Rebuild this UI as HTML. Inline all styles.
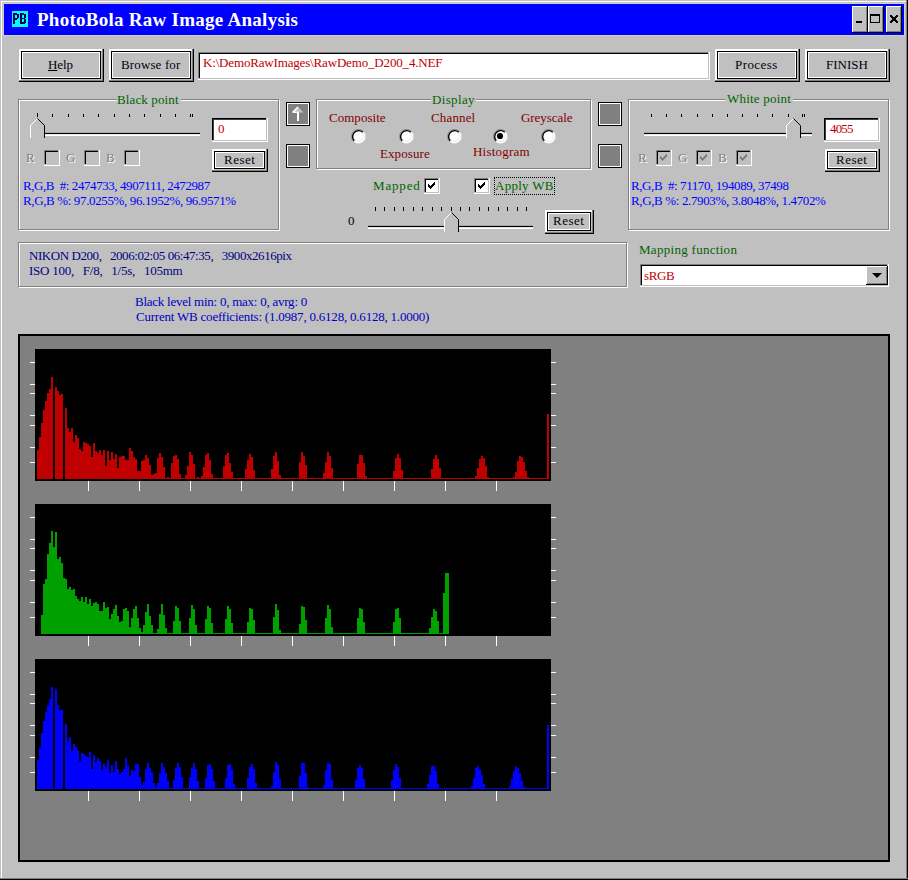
<!DOCTYPE html>
<html><head><meta charset="utf-8"><style>
html,body{margin:0;padding:0;width:908px;height:880px;overflow:hidden;background:#c0c0c0}
.a{position:absolute;box-sizing:border-box}
.t{position:absolute;font-family:"Liberation Serif",serif;white-space:pre;line-height:1;}
svg.a{overflow:visible}
</style></head><body>
<div class="a" style="left:0px;top:0px;width:908px;height:880px;background:#c0c0c0"></div>
<div class="a" style="left:1px;top:1px;width:906px;height:878px;border-left:1px solid #fff;border-top:1px solid #fff;box-sizing:border-box"></div>
<div class="a" style="left:906px;top:0px;width:1px;height:880px;background:#808080"></div>
<div class="a" style="left:907px;top:0px;width:1px;height:880px;background:#000"></div>
<div class="a" style="left:0px;top:878px;width:908px;height:1px;background:#808080"></div>
<div class="a" style="left:0px;top:879px;width:908px;height:1px;background:#000"></div>
<div class="a" style="left:3px;top:3px;width:902px;height:33px;background:#d4d0c8"></div>
<div class="a" style="left:4px;top:4px;width:900px;height:31px;background:#0000ff"></div>
<div class="a" style="left:12px;top:11px;width:16px;height:16px;background:#00ffff"></div>
<svg class="a" style="left:12px;top:11px" width="16" height="16" shape-rendering="crispEdges"><path fill="#000060" d="M1 2h4v1h-4zM8 2h4v1h-4zM1 3h6v1h-6zM8 3h6v1h-6zM1 4h2v1h-2zM5 4h2v1h-2zM8 4h2v1h-2zM12 4h2v1h-2zM1 5h2v1h-2zM5 5h2v1h-2zM8 5h2v1h-2zM12 5h2v1h-2zM1 6h2v1h-2zM5 6h2v1h-2zM8 6h2v1h-2zM12 6h2v1h-2zM1 7h5v1h-5zM8 7h5v1h-5zM1 8h4v1h-4zM8 8h2v1h-2zM12 8h2v1h-2zM1 9h2v1h-2zM8 9h2v1h-2zM12 9h2v1h-2zM1 10h2v1h-2zM8 10h2v1h-2zM12 10h2v1h-2zM1 11h2v1h-2zM8 11h6v1h-6zM1 12h2v1h-2zM8 12h5v1h-5z"/></svg>
<div class="t" style="left:37.00px;top:9.79px;color:#fff;font-size:19px;font-weight:bold;letter-spacing:0.263px;">PhotoBola Raw Image Analysis</div>
<div class="a" style="left:852px;top:6px;width:16px;height:27px;background:#c0c0c0;box-shadow:inset -1px -1px #000, inset 1px 1px #fff, inset -2px -2px #808080"></div>
<div class="a" style="left:868px;top:6px;width:16px;height:27px;background:#c0c0c0;box-shadow:inset -1px -1px #000, inset 1px 1px #fff, inset -2px -2px #808080"></div>
<div class="a" style="left:886px;top:6px;width:16px;height:27px;background:#c0c0c0;box-shadow:inset -1px -1px #000, inset 1px 1px #fff, inset -2px -2px #808080"></div>
<div class="a" style="left:856px;top:21px;width:6px;height:2px;background:#000"></div>
<div class="a" style="left:870px;top:14px;width:10px;height:9px;border:1px solid #000;border-top-width:2px;box-sizing:border-box"></div>
<svg class="a" style="left:890px;top:15px" width="8" height="8" shape-rendering="crispEdges"><path d="M0 0h2v1h-2zM6 0h2v1h-2zM0 1h3v1h-3zM5 1h3v1h-3zM1 2h6v1h-6zM2 3h4v1h-4zM2 4h4v1h-4zM1 5h6v1h-6zM0 6h3v1h-3zM5 6h3v1h-3zM0 7h2v1h-2zM6 7h2v1h-2z" fill="#000"/></svg>
<div class="a" style="left:19px;top:49px;width:85px;height:33px;background:#c0c0c0;box-shadow:inset -1px -1px #000, inset -2px -2px #808080, inset 2px 2px #fff"></div>
<div class="a" style="left:21px;top:51px;width:80px;height:28px;border:1px solid #000;box-sizing:border-box;box-shadow:inset 1px 1px #fff, inset -1px -1px #fff"></div>
<div class="t" style="left:48.00px;top:57.91px;color:#000010;font-size:13px;letter-spacing:-0.067px;"><u>H</u>elp</div>
<div class="a" style="left:109px;top:49px;width:85px;height:33px;background:#c0c0c0;box-shadow:inset -1px -1px #000, inset -2px -2px #808080, inset 2px 2px #fff"></div>
<div class="a" style="left:111px;top:51px;width:80px;height:28px;border:1px solid #000;box-sizing:border-box;box-shadow:inset 1px 1px #fff, inset -1px -1px #fff"></div>
<div class="t" style="left:121.00px;top:57.91px;color:#000010;font-size:13px;letter-spacing:0.133px;">Browse for</div>
<div class="a" style="left:715px;top:49px;width:85px;height:33px;background:#c0c0c0;box-shadow:inset -1px -1px #000, inset -2px -2px #808080, inset 2px 2px #fff"></div>
<div class="a" style="left:717px;top:51px;width:80px;height:28px;border:1px solid #000;box-sizing:border-box;box-shadow:inset 1px 1px #fff, inset -1px -1px #fff"></div>
<div class="t" style="left:735.00px;top:57.91px;color:#000010;font-size:13px;letter-spacing:0.417px;">Process</div>
<div class="a" style="left:805px;top:49px;width:85px;height:33px;background:#c0c0c0;box-shadow:inset -1px -1px #000, inset -2px -2px #808080, inset 2px 2px #fff"></div>
<div class="a" style="left:807px;top:51px;width:80px;height:28px;border:1px solid #000;box-sizing:border-box;box-shadow:inset 1px 1px #fff, inset -1px -1px #fff"></div>
<div class="t" style="left:826.00px;top:57.91px;color:#000010;font-size:13px;letter-spacing:-0.020px;">FINISH</div>
<div class="a" style="left:198px;top:52px;width:512px;height:28px;background:#fff;box-shadow:inset -1px -1px #fff, inset -2px -2px #c0c0c0, inset 1px 1px #808080, inset 2px 2px #000"></div>
<div class="t" style="left:203.00px;top:55.91px;color:#c00000;font-size:13px;letter-spacing:-0.165px;">K:\DemoRawImages\RawDemo_D200_4.NEF</div>
<div class="a" style="left:18px;top:99px;width:261px;height:131px;border:1px solid #808080;box-sizing:border-box;box-shadow:inset 1px 1px #fff, 1px 1px #fff"></div>
<div class="a" style="left:316px;top:99px;width:275px;height:70px;border:1px solid #808080;box-sizing:border-box;box-shadow:inset 1px 1px #fff, 1px 1px #fff"></div>
<div class="a" style="left:628px;top:99px;width:261px;height:131px;border:1px solid #808080;box-sizing:border-box;box-shadow:inset 1px 1px #fff, 1px 1px #fff"></div>
<div class="a" style="left:18px;top:242px;width:609px;height:45px;border:1px solid #808080;box-sizing:border-box;box-shadow:inset 1px 1px #fff, 1px 1px #fff"></div>
<div class="a" style="left:117px;top:96px;width:64px;height:8px;background:#c0c0c0"></div>
<div class="t" style="left:117.00px;top:92.81px;color:#006400;font-size:13px;letter-spacing:0.130px;">Black point</div>
<div class="a" style="left:431px;top:96px;width:45px;height:8px;background:#c0c0c0"></div>
<div class="t" style="left:432.00px;top:93.01px;color:#006400;font-size:13px;letter-spacing:0.350px;">Display</div>
<div class="a" style="left:725px;top:96px;width:68px;height:8px;background:#c0c0c0"></div>
<div class="t" style="left:727.00px;top:91.51px;color:#006400;font-size:13px;letter-spacing:0.220px;">White point</div>
<div class="a" style="left:30px;top:132px;width:170px;height:1px;background:#a8a8a8"></div>
<div class="a" style="left:30px;top:133px;width:170px;height:1px;background:#000"></div>
<div class="a" style="left:30px;top:134px;width:170px;height:1px;background:#e4e4e4"></div>
<div class="a" style="left:30px;top:135px;width:170px;height:1px;background:#fff"></div>
<div class="a" style="left:37px;top:114px;width:1px;height:3px;background:#000"></div>
<div class="a" style="left:52px;top:114px;width:1px;height:3px;background:#000"></div>
<div class="a" style="left:68px;top:114px;width:1px;height:3px;background:#000"></div>
<div class="a" style="left:83px;top:114px;width:1px;height:3px;background:#000"></div>
<div class="a" style="left:98px;top:114px;width:1px;height:3px;background:#000"></div>
<div class="a" style="left:114px;top:114px;width:1px;height:3px;background:#000"></div>
<div class="a" style="left:129px;top:114px;width:1px;height:3px;background:#000"></div>
<div class="a" style="left:144px;top:114px;width:1px;height:3px;background:#000"></div>
<div class="a" style="left:160px;top:114px;width:1px;height:3px;background:#000"></div>
<div class="a" style="left:175px;top:114px;width:1px;height:3px;background:#000"></div>
<div class="a" style="left:190px;top:114px;width:1px;height:3px;background:#000"></div>
<div class="a" style="left:192px;top:114px;width:1px;height:3px;background:#000"></div>
<div class="a" style="left:37px;top:113px;width:1px;height:1px;background:#000"></div>
<svg class="a" style="left:30px;top:118px" width="16" height="20" shape-rendering="crispEdges"><polygon points="0.5,19.5 0.5,7.5 7.5,0.5 14.5,7.5 14.5,19.5" fill="#c0c0c0"/><path d="M0.5 20V7.5L7.5 0.5" stroke="#fff" fill="none" stroke-width="1" shape-rendering="auto"/><path d="M7.5 0.5L14.5 7.5V20" stroke="#000" fill="none" stroke-width="1" shape-rendering="auto"/></svg>
<div class="a" style="left:644px;top:132px;width:168px;height:1px;background:#a8a8a8"></div>
<div class="a" style="left:644px;top:133px;width:168px;height:1px;background:#000"></div>
<div class="a" style="left:644px;top:134px;width:168px;height:1px;background:#e4e4e4"></div>
<div class="a" style="left:644px;top:135px;width:168px;height:1px;background:#fff"></div>
<div class="a" style="left:651px;top:114px;width:1px;height:3px;background:#000"></div>
<div class="a" style="left:666px;top:114px;width:1px;height:3px;background:#000"></div>
<div class="a" style="left:681px;top:114px;width:1px;height:3px;background:#000"></div>
<div class="a" style="left:697px;top:114px;width:1px;height:3px;background:#000"></div>
<div class="a" style="left:712px;top:114px;width:1px;height:3px;background:#000"></div>
<div class="a" style="left:727px;top:114px;width:1px;height:3px;background:#000"></div>
<div class="a" style="left:742px;top:114px;width:1px;height:3px;background:#000"></div>
<div class="a" style="left:757px;top:114px;width:1px;height:3px;background:#000"></div>
<div class="a" style="left:772px;top:114px;width:1px;height:3px;background:#000"></div>
<div class="a" style="left:788px;top:114px;width:1px;height:3px;background:#000"></div>
<div class="a" style="left:802px;top:114px;width:1px;height:3px;background:#000"></div>
<div class="a" style="left:804px;top:114px;width:1px;height:3px;background:#000"></div>
<svg class="a" style="left:786px;top:118px" width="16" height="20" shape-rendering="crispEdges"><polygon points="0.5,19.5 0.5,7.5 7.5,0.5 14.5,7.5 14.5,19.5" fill="#c0c0c0"/><path d="M0.5 20V7.5L7.5 0.5" stroke="#fff" fill="none" stroke-width="1" shape-rendering="auto"/><path d="M7.5 0.5L14.5 7.5V20" stroke="#000" fill="none" stroke-width="1" shape-rendering="auto"/></svg>
<div class="a" style="left:368px;top:225px;width:165px;height:1px;background:#a8a8a8"></div>
<div class="a" style="left:368px;top:226px;width:165px;height:1px;background:#000"></div>
<div class="a" style="left:368px;top:227px;width:165px;height:1px;background:#e4e4e4"></div>
<div class="a" style="left:368px;top:228px;width:165px;height:1px;background:#fff"></div>
<div class="a" style="left:375px;top:207px;width:1px;height:4px;background:#000"></div>
<div class="a" style="left:384px;top:207px;width:1px;height:4px;background:#000"></div>
<div class="a" style="left:394px;top:207px;width:1px;height:4px;background:#000"></div>
<div class="a" style="left:403px;top:207px;width:1px;height:4px;background:#000"></div>
<div class="a" style="left:413px;top:207px;width:1px;height:4px;background:#000"></div>
<div class="a" style="left:422px;top:207px;width:1px;height:4px;background:#000"></div>
<div class="a" style="left:432px;top:207px;width:1px;height:4px;background:#000"></div>
<div class="a" style="left:441px;top:207px;width:1px;height:4px;background:#000"></div>
<div class="a" style="left:451px;top:207px;width:1px;height:4px;background:#000"></div>
<div class="a" style="left:460px;top:207px;width:1px;height:4px;background:#000"></div>
<div class="a" style="left:469px;top:207px;width:1px;height:4px;background:#000"></div>
<div class="a" style="left:479px;top:207px;width:1px;height:4px;background:#000"></div>
<div class="a" style="left:488px;top:207px;width:1px;height:4px;background:#000"></div>
<div class="a" style="left:498px;top:207px;width:1px;height:4px;background:#000"></div>
<div class="a" style="left:507px;top:207px;width:1px;height:4px;background:#000"></div>
<div class="a" style="left:517px;top:207px;width:1px;height:4px;background:#000"></div>
<div class="a" style="left:526px;top:207px;width:1px;height:4px;background:#000"></div>
<svg class="a" style="left:444px;top:212px" width="16" height="20" shape-rendering="crispEdges"><polygon points="0.5,19.5 0.5,7.5 7.5,0.5 14.5,7.5 14.5,19.5" fill="#c0c0c0"/><path d="M0.5 20V7.5L7.5 0.5" stroke="#fff" fill="none" stroke-width="1" shape-rendering="auto"/><path d="M7.5 0.5L14.5 7.5V20" stroke="#000" fill="none" stroke-width="1" shape-rendering="auto"/></svg>
<div class="a" style="left:212px;top:118px;width:56px;height:24px;background:#fff;box-shadow:inset -1px -1px #fff, inset -2px -2px #c0c0c0, inset 1px 1px #000, inset 2px 2px #404040"></div>
<div class="t" style="left:218.00px;top:122.11px;color:#c00000;font-size:13px;letter-spacing:0.000px;">0</div>
<div class="a" style="left:824px;top:118px;width:56px;height:24px;background:#fff;box-shadow:inset -1px -1px #fff, inset -2px -2px #c0c0c0, inset 1px 1px #000, inset 2px 2px #404040"></div>
<div class="t" style="left:830.00px;top:122.11px;color:#c00000;font-size:13px;letter-spacing:-0.833px;">4055</div>
<div class="a" style="left:212px;top:149px;width:56px;height:23px;background:#c0c0c0;box-shadow:inset -1px -1px #000, inset -2px -2px #808080, inset 2px 2px #fff"></div>
<div class="a" style="left:214px;top:151px;width:51px;height:18px;border:1px solid #000;box-sizing:border-box;box-shadow:inset 1px 1px #fff, inset -1px -1px #fff"></div>
<div class="t" style="left:224.00px;top:152.81px;color:#000010;font-size:13px;letter-spacing:0.525px;">Reset</div>
<div class="a" style="left:825px;top:149px;width:55px;height:23px;background:#c0c0c0;box-shadow:inset -1px -1px #000, inset -2px -2px #808080, inset 2px 2px #fff"></div>
<div class="a" style="left:827px;top:151px;width:50px;height:18px;border:1px solid #000;box-sizing:border-box;box-shadow:inset 1px 1px #fff, inset -1px -1px #fff"></div>
<div class="t" style="left:836.00px;top:152.81px;color:#000010;font-size:13px;letter-spacing:0.525px;">Reset</div>
<div class="a" style="left:545px;top:210px;width:49px;height:24px;background:#c0c0c0;box-shadow:inset -1px -1px #000, inset -2px -2px #808080, inset 2px 2px #fff"></div>
<div class="a" style="left:547px;top:212px;width:44px;height:19px;border:1px solid #000;box-sizing:border-box;box-shadow:inset 1px 1px #fff, inset -1px -1px #fff"></div>
<div class="t" style="left:553.00px;top:213.51px;color:#000010;font-size:13px;letter-spacing:0.525px;">Reset</div>
<div class="t" style="left:27.00px;top:151.71px;color:#fff;font-size:13px;">R</div>
<div class="t" style="left:26.00px;top:150.71px;color:#808080;font-size:13px;">R</div>
<div class="a" style="left:44px;top:150px;width:16px;height:16px;background:#c0c0c0;box-shadow:inset -1px -1px #fff, inset -2px -2px #c0c0c0, inset 1px 1px #808080, inset 2px 2px #000"></div>
<div class="t" style="left:67.00px;top:151.71px;color:#fff;font-size:13px;">G</div>
<div class="t" style="left:66.00px;top:150.71px;color:#808080;font-size:13px;">G</div>
<div class="a" style="left:84px;top:150px;width:16px;height:16px;background:#c0c0c0;box-shadow:inset -1px -1px #fff, inset -2px -2px #c0c0c0, inset 1px 1px #808080, inset 2px 2px #000"></div>
<div class="t" style="left:107.00px;top:151.71px;color:#fff;font-size:13px;">B</div>
<div class="t" style="left:106.00px;top:150.71px;color:#808080;font-size:13px;">B</div>
<div class="a" style="left:124px;top:150px;width:16px;height:16px;background:#c0c0c0;box-shadow:inset -1px -1px #fff, inset -2px -2px #c0c0c0, inset 1px 1px #808080, inset 2px 2px #000"></div>
<div class="t" style="left:639.00px;top:151.71px;color:#fff;font-size:13px;">R</div>
<div class="t" style="left:638.00px;top:150.71px;color:#808080;font-size:13px;">R</div>
<div class="a" style="left:656px;top:150px;width:16px;height:16px;background:#c0c0c0;box-shadow:inset -1px -1px #fff, inset -2px -2px #c0c0c0, inset 1px 1px #808080, inset 2px 2px #000"></div>
<svg class="a" style="left:660px;top:154px" width="7" height="7" shape-rendering="crispEdges"><path d="M6 0h1v1h-1zM5 1h2v1h-2zM0 2h1v1h-1zM4 2h3v1h-3zM0 3h2v1h-2zM3 3h3v1h-3zM0 4h5v1h-5zM1 5h3v1h-3zM2 6h1v1h-1z" fill="#808080"/></svg>
<div class="t" style="left:679.00px;top:151.71px;color:#fff;font-size:13px;">G</div>
<div class="t" style="left:678.00px;top:150.71px;color:#808080;font-size:13px;">G</div>
<div class="a" style="left:696px;top:150px;width:16px;height:16px;background:#c0c0c0;box-shadow:inset -1px -1px #fff, inset -2px -2px #c0c0c0, inset 1px 1px #808080, inset 2px 2px #000"></div>
<svg class="a" style="left:700px;top:154px" width="7" height="7" shape-rendering="crispEdges"><path d="M6 0h1v1h-1zM5 1h2v1h-2zM0 2h1v1h-1zM4 2h3v1h-3zM0 3h2v1h-2zM3 3h3v1h-3zM0 4h5v1h-5zM1 5h3v1h-3zM2 6h1v1h-1z" fill="#808080"/></svg>
<div class="t" style="left:719.00px;top:151.71px;color:#fff;font-size:13px;">B</div>
<div class="t" style="left:718.00px;top:150.71px;color:#808080;font-size:13px;">B</div>
<div class="a" style="left:736px;top:150px;width:16px;height:16px;background:#c0c0c0;box-shadow:inset -1px -1px #fff, inset -2px -2px #c0c0c0, inset 1px 1px #808080, inset 2px 2px #000"></div>
<svg class="a" style="left:740px;top:154px" width="7" height="7" shape-rendering="crispEdges"><path d="M6 0h1v1h-1zM5 1h2v1h-2zM0 2h1v1h-1zM4 2h3v1h-3zM0 3h2v1h-2zM3 3h3v1h-3zM0 4h5v1h-5zM1 5h3v1h-3zM2 6h1v1h-1z" fill="#808080"/></svg>
<div class="t" style="left:23.00px;top:179.11px;color:#0000ff;font-size:13px;letter-spacing:-0.426px;">R,G,B&nbsp; #: 2474733, 4907111, 2472987</div>
<div class="t" style="left:23.00px;top:194.11px;color:#0000ff;font-size:13px;letter-spacing:-0.367px;">R,G,B %: 97.0255%, 96.1952%, 96.9571%</div>
<div class="t" style="left:631.00px;top:179.11px;color:#0000ff;font-size:13px;letter-spacing:-0.403px;">R,G,B&nbsp; #: 71170, 194089, 37498</div>
<div class="t" style="left:631.00px;top:194.11px;color:#0000ff;font-size:13px;letter-spacing:-0.364px;">R,G,B %: 2.7903%, 3.8048%, 1.4702%</div>
<div class="a" style="left:286px;top:102px;width:24px;height:24px;background:#808080;border:1px solid #000;box-sizing:border-box;box-shadow:inset 1px 1px #fff, inset -1px -1px #fff"></div>
<svg class="a" style="left:286px;top:102px" width="24" height="24"><polygon points="6.5,10.5 12,5 17.5,10.5" fill="#c4c4c4"/><path d="M6.8 10.2L12 5" stroke="#fff" stroke-width="1.6"/><path d="M6.5 10.3H12" stroke="#fff" stroke-width="1.2"/><rect x="11" y="10" width="2" height="9" fill="#fff"/></svg>
<div class="a" style="left:286px;top:144px;width:24px;height:24px;background:#808080;border:1px solid #000;box-sizing:border-box;box-shadow:inset 1px 1px #fff, inset -1px -1px #fff"></div>
<div class="a" style="left:598px;top:102px;width:24px;height:24px;background:#808080;border:1px solid #000;box-sizing:border-box;box-shadow:inset 1px 1px #fff, inset -1px -1px #fff"></div>
<div class="a" style="left:598px;top:144px;width:24px;height:24px;background:#808080;border:1px solid #000;box-sizing:border-box;box-shadow:inset 1px 1px #fff, inset -1px -1px #fff"></div>
<div class="t" style="left:329.00px;top:111.11px;color:#800000;font-size:13px;letter-spacing:0.025px;">Composite</div>
<div class="t" style="left:431.00px;top:111.11px;color:#800000;font-size:13px;letter-spacing:0.150px;">Channel</div>
<div class="t" style="left:521.00px;top:111.11px;color:#800000;font-size:13px;letter-spacing:-0.062px;">Greyscale</div>
<div class="t" style="left:380.00px;top:147.01px;color:#800000;font-size:13px;letter-spacing:0.086px;">Exposure</div>
<div class="t" style="left:473.00px;top:144.91px;color:#800000;font-size:13px;letter-spacing:0.225px;">Histogram</div>
<svg class="a" style="left:350.0px;top:128.0px" width="17" height="17"><circle cx="8.5" cy="8.5" r="6" fill="#fff"/><path d="M3.48 13.52A7.1 7.1 0 0 1 13.52 3.48" stroke="#808080" stroke-width="0.9" fill="none"/><path d="M13.03 3.97A6.4 6.4 0 0 1 3.97 13.03" stroke="#fff" stroke-width="1.3" fill="none"/><path d="M4.26 12.74A6.0 6.0 0 0 1 12.74 4.26" stroke="#000" stroke-width="1.4" fill="none"/><path d="M12.04 4.96A5.0 5.0 0 0 1 4.96 12.04" stroke="#d8d8d8" stroke-width="0.7" fill="none"/><circle cx="8.5" cy="8.5" r="4.6" fill="#fff"/></svg>
<svg class="a" style="left:398.0px;top:128.0px" width="17" height="17"><circle cx="8.5" cy="8.5" r="6" fill="#fff"/><path d="M3.48 13.52A7.1 7.1 0 0 1 13.52 3.48" stroke="#808080" stroke-width="0.9" fill="none"/><path d="M13.03 3.97A6.4 6.4 0 0 1 3.97 13.03" stroke="#fff" stroke-width="1.3" fill="none"/><path d="M4.26 12.74A6.0 6.0 0 0 1 12.74 4.26" stroke="#000" stroke-width="1.4" fill="none"/><path d="M12.04 4.96A5.0 5.0 0 0 1 4.96 12.04" stroke="#d8d8d8" stroke-width="0.7" fill="none"/><circle cx="8.5" cy="8.5" r="4.6" fill="#fff"/></svg>
<svg class="a" style="left:446.0px;top:128.0px" width="17" height="17"><circle cx="8.5" cy="8.5" r="6" fill="#fff"/><path d="M3.48 13.52A7.1 7.1 0 0 1 13.52 3.48" stroke="#808080" stroke-width="0.9" fill="none"/><path d="M13.03 3.97A6.4 6.4 0 0 1 3.97 13.03" stroke="#fff" stroke-width="1.3" fill="none"/><path d="M4.26 12.74A6.0 6.0 0 0 1 12.74 4.26" stroke="#000" stroke-width="1.4" fill="none"/><path d="M12.04 4.96A5.0 5.0 0 0 1 4.96 12.04" stroke="#d8d8d8" stroke-width="0.7" fill="none"/><circle cx="8.5" cy="8.5" r="4.6" fill="#fff"/></svg>
<svg class="a" style="left:492.0px;top:128.0px" width="17" height="17"><circle cx="8.5" cy="8.5" r="6" fill="#fff"/><path d="M3.48 13.52A7.1 7.1 0 0 1 13.52 3.48" stroke="#808080" stroke-width="0.9" fill="none"/><path d="M13.03 3.97A6.4 6.4 0 0 1 3.97 13.03" stroke="#fff" stroke-width="1.3" fill="none"/><path d="M4.26 12.74A6.0 6.0 0 0 1 12.74 4.26" stroke="#000" stroke-width="1.4" fill="none"/><path d="M12.04 4.96A5.0 5.0 0 0 1 4.96 12.04" stroke="#d8d8d8" stroke-width="0.7" fill="none"/><circle cx="8.5" cy="8.5" r="4.6" fill="#fff"/><circle cx="8.0" cy="8.0" r="3.1" fill="#000"/></svg>
<svg class="a" style="left:540.0px;top:128.0px" width="17" height="17"><circle cx="8.5" cy="8.5" r="6" fill="#fff"/><path d="M3.48 13.52A7.1 7.1 0 0 1 13.52 3.48" stroke="#808080" stroke-width="0.9" fill="none"/><path d="M13.03 3.97A6.4 6.4 0 0 1 3.97 13.03" stroke="#fff" stroke-width="1.3" fill="none"/><path d="M4.26 12.74A6.0 6.0 0 0 1 12.74 4.26" stroke="#000" stroke-width="1.4" fill="none"/><path d="M12.04 4.96A5.0 5.0 0 0 1 4.96 12.04" stroke="#d8d8d8" stroke-width="0.7" fill="none"/><circle cx="8.5" cy="8.5" r="4.6" fill="#fff"/></svg>
<div class="t" style="left:373.00px;top:178.61px;color:#006400;font-size:13px;letter-spacing:0.840px;">Mapped</div>
<div class="a" style="left:424px;top:178px;width:16px;height:16px;background:#fff;box-shadow:inset -1px -1px #fff, inset -2px -2px #c0c0c0, inset 1px 1px #808080, inset 2px 2px #000"></div>
<svg class="a" style="left:428px;top:182px" width="7" height="7" shape-rendering="crispEdges"><path d="M6 0h1v1h-1zM5 1h2v1h-2zM0 2h1v1h-1zM4 2h3v1h-3zM0 3h2v1h-2zM3 3h3v1h-3zM0 4h5v1h-5zM1 5h3v1h-3zM2 6h1v1h-1z" fill="#000"/></svg>
<div class="a" style="left:474px;top:178px;width:16px;height:16px;background:#fff;box-shadow:inset -1px -1px #fff, inset -2px -2px #c0c0c0, inset 1px 1px #808080, inset 2px 2px #000"></div>
<svg class="a" style="left:478px;top:182px" width="7" height="7" shape-rendering="crispEdges"><path d="M6 0h1v1h-1zM5 1h2v1h-2zM0 2h1v1h-1zM4 2h3v1h-3zM0 3h2v1h-2zM3 3h3v1h-3zM0 4h5v1h-5zM1 5h3v1h-3zM2 6h1v1h-1z" fill="#000"/></svg>
<div class="a" style="left:494px;top:177px;width:61px;height:18px;outline:1px dotted #000;outline-offset:-1px"></div>
<div class="t" style="left:495.00px;top:179.01px;color:#006400;font-size:13px;letter-spacing:0.271px;">Apply WB</div>
<div class="t" style="left:348.00px;top:214.11px;color:#000020;font-size:13px;">0</div>
<div class="t" style="left:29.00px;top:248.91px;color:#000080;font-size:13px;letter-spacing:-0.433px;">NIKON D200,&nbsp;&nbsp; 2006:02:05 06:47:35,&nbsp;&nbsp; 3900x2616pix</div>
<div class="t" style="left:29.00px;top:263.71px;color:#000080;font-size:13px;letter-spacing:-0.260px;">ISO 100,&nbsp;&nbsp; F/8,&nbsp;&nbsp; 1/5s,&nbsp;&nbsp; 105mm</div>
<div class="t" style="left:639.00px;top:243.41px;color:#006400;font-size:13px;letter-spacing:0.293px;">Mapping function</div>
<div class="a" style="left:640px;top:264px;width:249px;height:23px;background:#fff;box-shadow:inset -1px -1px #fff, inset -2px -2px #c0c0c0, inset 1px 1px #808080, inset 2px 2px #000"></div>
<div class="t" style="left:644.00px;top:269.11px;color:#c00000;font-size:13px;letter-spacing:-0.333px;">sRGB</div>
<div class="a" style="left:866px;top:266px;width:22px;height:19px;background:#c0c0c0;box-shadow:inset -1px -1px #000, inset 1px 1px #fff, inset -2px -2px #808080"></div>
<svg class="a" style="left:872px;top:273px" width="10" height="6"><path d="M0 0H10L5 5Z" fill="#000"/></svg>
<div class="t" style="left:135.00px;top:295.11px;color:#0000c0;font-size:13px;letter-spacing:-0.247px;">Black level min: 0, max: 0, avrg: 0</div>
<div class="t" style="left:136.00px;top:309.81px;color:#0000c0;font-size:13px;letter-spacing:-0.214px;">Current WB coefficients: (1.0987, 0.6128, 0.6128, 1.0000)</div>
<div class="a" style="left:18px;top:334px;width:872px;height:528px;background:#808080;border:2px solid #000;box-sizing:border-box"></div>
<svg class="a" style="left:35px;top:349px" width="516" height="132" shape-rendering="crispEdges"><rect x="0" y="0" width="516" height="132" fill="#000"/><path d="M2 101h2v29h-2zM4 88h2v42h-2zM6 74h2v56h-2zM8 61h2v69h-2zM10 52h2v78h-2zM12 44h2v86h-2zM14 40h2v90h-2zM16 28h2v102h-2zM20 38h2v92h-2zM22 42h2v88h-2zM24 46h2v84h-2zM26 45h2v85h-2zM30 59h2v71h-2zM32 79h2v51h-2zM34 83h2v47h-2zM36 79h2v51h-2zM38 93h2v37h-2zM40 86h2v44h-2zM42 89h2v41h-2zM44 100h2v30h-2zM46 102h2v28h-2zM48 93h2v37h-2zM50 94h2v36h-2zM52 95h2v35h-2zM54 97h2v33h-2zM56 108h2v22h-2zM58 94h2v36h-2zM60 102h2v28h-2zM62 104h2v26h-2zM64 101h2v29h-2zM66 106h2v24h-2zM68 101h2v29h-2zM70 117h2v13h-2zM72 102h2v28h-2zM74 111h2v19h-2zM76 103h2v27h-2zM78 110h2v20h-2zM80 105h2v25h-2zM82 119h2v11h-2zM84 108h2v22h-2zM86 107h2v23h-2zM88 107h2v23h-2zM90 111h2v19h-2zM92 111h2v19h-2zM94 99h2v31h-2zM96 102h2v28h-2zM98 108h2v22h-2zM100 110h2v20h-2zM102 122h2v8h-2zM104 122h2v8h-2zM106 112h2v18h-2zM108 111h2v19h-2zM110 106h2v24h-2zM112 109h2v21h-2zM114 116h2v14h-2zM116 126h2v4h-2zM118 125h2v5h-2zM120 124h2v6h-2zM122 109h2v21h-2zM124 104h2v26h-2zM126 108h2v22h-2zM128 118h2v12h-2zM130 129h2v1h-2zM132 128h2v2h-2zM134 129h2v1h-2zM136 114h2v16h-2zM138 107h2v23h-2zM140 106h2v24h-2zM142 110h2v20h-2zM144 125h2v5h-2zM146 129h2v1h-2zM148 129h2v1h-2zM150 126h2v4h-2zM152 117h2v13h-2zM154 103h2v27h-2zM156 106h2v24h-2zM158 115h2v15h-2zM160 129h2v1h-2zM162 128h2v2h-2zM164 129h2v1h-2zM166 127h2v3h-2zM168 118h2v12h-2zM170 106h2v24h-2zM172 104h2v26h-2zM174 111h2v19h-2zM176 125h2v5h-2zM178 129h2v1h-2zM180 129h2v1h-2zM182 129h2v1h-2zM184 129h2v1h-2zM186 129h2v1h-2zM188 117h2v13h-2zM190 106h2v24h-2zM192 104h2v26h-2zM194 114h2v16h-2zM196 123h2v7h-2zM198 129h2v1h-2zM200 129h2v1h-2zM202 129h2v1h-2zM204 129h2v1h-2zM206 129h2v1h-2zM208 129h2v1h-2zM210 120h2v10h-2zM212 111h2v19h-2zM214 105h2v25h-2zM216 108h2v22h-2zM218 121h2v9h-2zM220 129h2v1h-2zM222 129h2v1h-2zM224 129h2v1h-2zM226 129h2v1h-2zM228 129h2v1h-2zM230 129h2v1h-2zM232 129h2v1h-2zM234 129h2v1h-2zM236 120h2v10h-2zM238 107h2v23h-2zM240 103h2v27h-2zM242 112h2v18h-2zM244 126h2v4h-2zM246 129h2v1h-2zM248 129h2v1h-2zM250 129h2v1h-2zM252 129h2v1h-2zM254 129h2v1h-2zM256 129h2v1h-2zM258 129h2v1h-2zM260 129h2v1h-2zM262 129h2v1h-2zM264 113h2v17h-2zM266 103h2v27h-2zM268 107h2v23h-2zM270 116h2v14h-2zM272 129h2v1h-2zM274 129h2v1h-2zM276 129h2v1h-2zM278 129h2v1h-2zM280 129h2v1h-2zM282 129h2v1h-2zM284 129h2v1h-2zM286 129h2v1h-2zM288 124h2v6h-2zM290 113h2v17h-2zM292 103h2v27h-2zM294 107h2v23h-2zM296 119h2v11h-2zM298 129h2v1h-2zM300 129h2v1h-2zM302 129h2v1h-2zM304 129h2v1h-2zM306 129h2v1h-2zM308 129h2v1h-2zM310 129h2v1h-2zM312 129h2v1h-2zM314 129h2v1h-2zM316 129h2v1h-2zM318 129h2v1h-2zM320 129h2v1h-2zM322 115h2v15h-2zM324 106h2v24h-2zM326 106h2v24h-2zM328 114h2v16h-2zM330 127h2v3h-2zM332 129h2v1h-2zM334 129h2v1h-2zM336 129h2v1h-2zM338 129h2v1h-2zM340 129h2v1h-2zM342 129h2v1h-2zM344 129h2v1h-2zM346 129h2v1h-2zM348 129h2v1h-2zM350 129h2v1h-2zM352 129h2v1h-2zM354 129h2v1h-2zM356 129h2v1h-2zM358 122h2v8h-2zM360 109h2v21h-2zM362 105h2v25h-2zM364 109h2v21h-2zM366 121h2v9h-2zM368 129h2v1h-2zM370 129h2v1h-2zM372 129h2v1h-2zM374 129h2v1h-2zM376 129h2v1h-2zM378 129h2v1h-2zM380 129h2v1h-2zM382 129h2v1h-2zM384 129h2v1h-2zM386 129h2v1h-2zM388 129h2v1h-2zM390 129h2v1h-2zM392 129h2v1h-2zM394 129h2v1h-2zM396 120h2v10h-2zM398 110h2v20h-2zM400 106h2v24h-2zM402 110h2v20h-2zM404 119h2v11h-2zM406 129h2v1h-2zM408 129h2v1h-2zM410 129h2v1h-2zM412 129h2v1h-2zM414 129h2v1h-2zM416 129h2v1h-2zM418 129h2v1h-2zM420 129h2v1h-2zM422 129h2v1h-2zM424 129h2v1h-2zM426 129h2v1h-2zM428 129h2v1h-2zM430 129h2v1h-2zM432 129h2v1h-2zM434 129h2v1h-2zM436 129h2v1h-2zM438 129h2v1h-2zM440 127h2v3h-2zM442 119h2v11h-2zM444 110h2v20h-2zM446 107h2v23h-2zM448 109h2v21h-2zM450 117h2v13h-2zM452 128h2v2h-2zM454 129h2v1h-2zM456 129h2v1h-2zM458 129h2v1h-2zM460 129h2v1h-2zM462 129h2v1h-2zM464 129h2v1h-2zM466 129h2v1h-2zM468 129h2v1h-2zM470 129h2v1h-2zM472 129h2v1h-2zM474 129h2v1h-2zM476 129h2v1h-2zM478 128h2v2h-2zM480 123h2v7h-2zM482 112h2v18h-2zM484 107h2v23h-2zM486 108h2v22h-2zM488 113h2v17h-2zM490 122h2v8h-2zM492 128h2v2h-2zM494 129h2v1h-2zM496 129h2v1h-2zM498 129h2v1h-2zM500 129h2v1h-2zM502 129h2v1h-2zM504 129h2v1h-2zM506 129h2v1h-2zM508 129h2v1h-2zM510 129h2v1h-2zM512 65h2v65h-2z" fill="#c00000"/></svg>
<div class="a" style="left:30px;top:362px;width:5px;height:1px;background:#fff"></div>
<div class="a" style="left:551px;top:362px;width:5px;height:1px;background:#fff"></div>
<div class="a" style="left:30px;top:384px;width:5px;height:1px;background:#fff"></div>
<div class="a" style="left:551px;top:384px;width:5px;height:1px;background:#fff"></div>
<div class="a" style="left:30px;top:393px;width:5px;height:1px;background:#fff"></div>
<div class="a" style="left:551px;top:393px;width:5px;height:1px;background:#fff"></div>
<div class="a" style="left:30px;top:415px;width:5px;height:1px;background:#fff"></div>
<div class="a" style="left:551px;top:415px;width:5px;height:1px;background:#fff"></div>
<div class="a" style="left:30px;top:425px;width:5px;height:1px;background:#fff"></div>
<div class="a" style="left:551px;top:425px;width:5px;height:1px;background:#fff"></div>
<div class="a" style="left:30px;top:447px;width:5px;height:1px;background:#fff"></div>
<div class="a" style="left:551px;top:447px;width:5px;height:1px;background:#fff"></div>
<div class="a" style="left:30px;top:462px;width:5px;height:1px;background:#fff"></div>
<div class="a" style="left:551px;top:462px;width:5px;height:1px;background:#fff"></div>
<div class="a" style="left:88px;top:481px;width:1px;height:10px;background:#fff"></div>
<div class="a" style="left:139px;top:481px;width:1px;height:10px;background:#fff"></div>
<div class="a" style="left:190px;top:481px;width:1px;height:10px;background:#fff"></div>
<div class="a" style="left:241px;top:481px;width:1px;height:10px;background:#fff"></div>
<div class="a" style="left:292px;top:481px;width:1px;height:10px;background:#fff"></div>
<div class="a" style="left:343px;top:481px;width:1px;height:10px;background:#fff"></div>
<div class="a" style="left:394px;top:481px;width:1px;height:10px;background:#fff"></div>
<div class="a" style="left:445px;top:481px;width:1px;height:10px;background:#fff"></div>
<div class="a" style="left:496px;top:481px;width:1px;height:10px;background:#fff"></div>
<svg class="a" style="left:35px;top:504px" width="516" height="132" shape-rendering="crispEdges"><rect x="0" y="0" width="516" height="132" fill="#000"/><path d="M6 111h2v19h-2zM8 80h2v50h-2zM10 75h2v55h-2zM12 50h2v80h-2zM14 39h2v91h-2zM16 27h2v103h-2zM18 43h2v87h-2zM20 28h2v102h-2zM22 55h2v75h-2zM24 53h2v77h-2zM26 59h2v71h-2zM28 74h2v56h-2zM30 75h2v55h-2zM32 85h2v45h-2zM34 83h2v47h-2zM36 86h2v44h-2zM38 85h2v45h-2zM40 92h2v38h-2zM42 95h2v35h-2zM44 97h2v33h-2zM46 93h2v37h-2zM48 98h2v32h-2zM50 93h2v37h-2zM52 100h2v30h-2zM54 95h2v35h-2zM56 102h2v28h-2zM58 99h2v31h-2zM60 98h2v32h-2zM62 100h2v30h-2zM64 107h2v23h-2zM66 107h2v23h-2zM68 98h2v32h-2zM70 104h2v26h-2zM72 103h2v27h-2zM74 115h2v15h-2zM76 110h2v20h-2zM78 105h2v25h-2zM80 101h2v29h-2zM82 112h2v18h-2zM84 118h2v12h-2zM86 117h2v13h-2zM88 105h2v25h-2zM90 104h2v26h-2zM92 107h2v23h-2zM94 123h2v7h-2zM96 114h2v16h-2zM98 105h2v25h-2zM100 102h2v28h-2zM102 114h2v16h-2zM104 124h2v6h-2zM106 128h2v2h-2zM108 121h2v9h-2zM110 108h2v22h-2zM112 100h2v30h-2zM114 112h2v18h-2zM116 121h2v9h-2zM118 129h2v1h-2zM120 129h2v1h-2zM122 125h2v5h-2zM124 110h2v20h-2zM126 100h2v30h-2zM128 111h2v19h-2zM130 124h2v6h-2zM132 129h2v1h-2zM134 129h2v1h-2zM136 129h2v1h-2zM138 117h2v13h-2zM140 102h2v28h-2zM142 104h2v26h-2zM144 117h2v13h-2zM146 129h2v1h-2zM148 129h2v1h-2zM150 129h2v1h-2zM152 129h2v1h-2zM154 114h2v16h-2zM156 101h2v29h-2zM158 105h2v25h-2zM160 121h2v9h-2zM162 129h2v1h-2zM164 129h2v1h-2zM166 129h2v1h-2zM168 129h2v1h-2zM170 115h2v15h-2zM172 102h2v28h-2zM174 104h2v26h-2zM176 119h2v11h-2zM178 129h2v1h-2zM180 129h2v1h-2zM182 129h2v1h-2zM184 129h2v1h-2zM186 129h2v1h-2zM188 129h2v1h-2zM190 115h2v15h-2zM192 102h2v28h-2zM194 105h2v25h-2zM196 119h2v11h-2zM198 129h2v1h-2zM200 129h2v1h-2zM202 129h2v1h-2zM204 129h2v1h-2zM206 129h2v1h-2zM208 129h2v1h-2zM210 129h2v1h-2zM212 118h2v12h-2zM214 104h2v26h-2zM216 105h2v25h-2zM218 116h2v14h-2zM220 129h2v1h-2zM222 129h2v1h-2zM224 129h2v1h-2zM226 129h2v1h-2zM228 129h2v1h-2zM230 129h2v1h-2zM232 129h2v1h-2zM234 129h2v1h-2zM236 129h2v1h-2zM238 113h2v17h-2zM240 100h2v30h-2zM242 106h2v24h-2zM244 126h2v4h-2zM246 129h2v1h-2zM248 129h2v1h-2zM250 129h2v1h-2zM252 129h2v1h-2zM254 129h2v1h-2zM256 129h2v1h-2zM258 129h2v1h-2zM260 129h2v1h-2zM262 129h2v1h-2zM264 120h2v10h-2zM266 102h2v28h-2zM268 103h2v27h-2zM270 116h2v14h-2zM272 129h2v1h-2zM274 129h2v1h-2zM276 129h2v1h-2zM278 129h2v1h-2zM280 129h2v1h-2zM282 129h2v1h-2zM284 129h2v1h-2zM286 129h2v1h-2zM288 129h2v1h-2zM290 114h2v16h-2zM292 101h2v29h-2zM294 105h2v25h-2zM296 123h2v7h-2zM298 129h2v1h-2zM300 129h2v1h-2zM302 129h2v1h-2zM304 129h2v1h-2zM306 129h2v1h-2zM308 129h2v1h-2zM310 129h2v1h-2zM312 129h2v1h-2zM314 129h2v1h-2zM316 129h2v1h-2zM318 129h2v1h-2zM320 129h2v1h-2zM322 114h2v16h-2zM324 104h2v26h-2zM326 105h2v25h-2zM328 118h2v12h-2zM330 129h2v1h-2zM332 129h2v1h-2zM334 129h2v1h-2zM336 129h2v1h-2zM338 129h2v1h-2zM340 129h2v1h-2zM342 129h2v1h-2zM344 129h2v1h-2zM346 129h2v1h-2zM348 129h2v1h-2zM350 129h2v1h-2zM352 129h2v1h-2zM354 129h2v1h-2zM356 129h2v1h-2zM358 118h2v12h-2zM360 105h2v25h-2zM362 104h2v26h-2zM364 114h2v16h-2zM366 129h2v1h-2zM368 129h2v1h-2zM370 129h2v1h-2zM372 129h2v1h-2zM374 129h2v1h-2zM376 129h2v1h-2zM378 129h2v1h-2zM380 129h2v1h-2zM382 129h2v1h-2zM384 129h2v1h-2zM386 129h2v1h-2zM388 129h2v1h-2zM390 129h2v1h-2zM392 129h2v1h-2zM394 124h2v6h-2zM396 113h2v17h-2zM398 105h2v25h-2zM400 107h2v23h-2zM402 117h2v13h-2zM404 129h2v1h-2zM406 129h2v1h-2zM408 89h2v41h-2zM410 69h2v61h-2zM412 69h2v61h-2z" fill="#00a000"/></svg>
<div class="a" style="left:30px;top:517px;width:5px;height:1px;background:#fff"></div>
<div class="a" style="left:551px;top:517px;width:5px;height:1px;background:#fff"></div>
<div class="a" style="left:30px;top:539px;width:5px;height:1px;background:#fff"></div>
<div class="a" style="left:551px;top:539px;width:5px;height:1px;background:#fff"></div>
<div class="a" style="left:30px;top:548px;width:5px;height:1px;background:#fff"></div>
<div class="a" style="left:551px;top:548px;width:5px;height:1px;background:#fff"></div>
<div class="a" style="left:30px;top:570px;width:5px;height:1px;background:#fff"></div>
<div class="a" style="left:551px;top:570px;width:5px;height:1px;background:#fff"></div>
<div class="a" style="left:30px;top:580px;width:5px;height:1px;background:#fff"></div>
<div class="a" style="left:551px;top:580px;width:5px;height:1px;background:#fff"></div>
<div class="a" style="left:30px;top:602px;width:5px;height:1px;background:#fff"></div>
<div class="a" style="left:551px;top:602px;width:5px;height:1px;background:#fff"></div>
<div class="a" style="left:30px;top:617px;width:5px;height:1px;background:#fff"></div>
<div class="a" style="left:551px;top:617px;width:5px;height:1px;background:#fff"></div>
<div class="a" style="left:88px;top:636px;width:1px;height:10px;background:#fff"></div>
<div class="a" style="left:139px;top:636px;width:1px;height:10px;background:#fff"></div>
<div class="a" style="left:190px;top:636px;width:1px;height:10px;background:#fff"></div>
<div class="a" style="left:241px;top:636px;width:1px;height:10px;background:#fff"></div>
<div class="a" style="left:292px;top:636px;width:1px;height:10px;background:#fff"></div>
<div class="a" style="left:343px;top:636px;width:1px;height:10px;background:#fff"></div>
<div class="a" style="left:394px;top:636px;width:1px;height:10px;background:#fff"></div>
<div class="a" style="left:445px;top:636px;width:1px;height:10px;background:#fff"></div>
<div class="a" style="left:496px;top:636px;width:1px;height:10px;background:#fff"></div>
<svg class="a" style="left:35px;top:659px" width="516" height="132" shape-rendering="crispEdges"><rect x="0" y="0" width="516" height="132" fill="#000"/><path d="M2 101h2v29h-2zM4 89h2v41h-2zM6 74h2v56h-2zM8 62h2v68h-2zM10 53h2v77h-2zM12 46h2v84h-2zM14 40h2v90h-2zM16 28h2v102h-2zM18 129h2v1h-2zM20 30h2v100h-2zM22 46h2v84h-2zM24 51h2v79h-2zM26 51h2v79h-2zM30 65h2v65h-2zM32 83h2v47h-2zM34 78h2v52h-2zM36 92h2v38h-2zM38 85h2v45h-2zM40 88h2v42h-2zM42 91h2v39h-2zM44 102h2v28h-2zM46 94h2v36h-2zM48 95h2v35h-2zM50 97h2v33h-2zM52 98h2v32h-2zM54 93h2v37h-2zM56 110h2v20h-2zM58 96h2v34h-2zM60 103h2v27h-2zM62 99h2v31h-2zM64 102h2v28h-2zM66 111h2v19h-2zM68 105h2v25h-2zM70 108h2v22h-2zM72 101h2v29h-2zM74 114h2v16h-2zM76 106h2v24h-2zM78 113h2v17h-2zM80 102h2v28h-2zM82 110h2v20h-2zM84 115h2v15h-2zM86 113h2v17h-2zM88 110h2v20h-2zM90 99h2v31h-2zM92 107h2v23h-2zM94 117h2v13h-2zM96 111h2v19h-2zM98 112h2v18h-2zM100 105h2v25h-2zM102 105h2v25h-2zM104 118h2v12h-2zM106 126h2v4h-2zM108 123h2v7h-2zM110 110h2v20h-2zM112 104h2v26h-2zM114 109h2v21h-2zM116 113h2v17h-2zM118 124h2v6h-2zM120 128h2v2h-2zM122 124h2v6h-2zM124 114h2v16h-2zM126 104h2v26h-2zM128 108h2v22h-2zM130 114h2v16h-2zM132 122h2v8h-2zM134 129h2v1h-2zM136 129h2v1h-2zM138 121h2v9h-2zM140 109h2v21h-2zM142 104h2v26h-2zM144 108h2v22h-2zM146 118h2v12h-2zM148 129h2v1h-2zM150 129h2v1h-2zM152 129h2v1h-2zM154 118h2v12h-2zM156 109h2v21h-2zM158 104h2v26h-2zM160 110h2v20h-2zM162 122h2v8h-2zM164 129h2v1h-2zM166 129h2v1h-2zM168 129h2v1h-2zM170 119h2v11h-2zM172 106h2v24h-2zM174 105h2v25h-2zM176 110h2v20h-2zM178 122h2v8h-2zM180 129h2v1h-2zM182 129h2v1h-2zM184 129h2v1h-2zM186 129h2v1h-2zM188 129h2v1h-2zM190 119h2v11h-2zM192 106h2v24h-2zM194 105h2v25h-2zM196 110h2v20h-2zM198 125h2v5h-2zM200 129h2v1h-2zM202 129h2v1h-2zM204 129h2v1h-2zM206 129h2v1h-2zM208 129h2v1h-2zM210 129h2v1h-2zM212 119h2v11h-2zM214 108h2v22h-2zM216 105h2v25h-2zM218 110h2v20h-2zM220 124h2v6h-2zM222 129h2v1h-2zM224 129h2v1h-2zM226 129h2v1h-2zM228 129h2v1h-2zM230 129h2v1h-2zM232 129h2v1h-2zM234 129h2v1h-2zM236 127h2v3h-2zM238 113h2v17h-2zM240 103h2v27h-2zM242 106h2v24h-2zM244 120h2v10h-2zM246 129h2v1h-2zM248 129h2v1h-2zM250 129h2v1h-2zM252 129h2v1h-2zM254 129h2v1h-2zM256 129h2v1h-2zM258 129h2v1h-2zM260 129h2v1h-2zM262 129h2v1h-2zM264 117h2v13h-2zM266 104h2v26h-2zM268 104h2v26h-2zM270 114h2v16h-2zM272 128h2v2h-2zM274 129h2v1h-2zM276 129h2v1h-2zM278 129h2v1h-2zM280 129h2v1h-2zM282 129h2v1h-2zM284 129h2v1h-2zM286 129h2v1h-2zM288 126h2v4h-2zM290 111h2v19h-2zM292 104h2v26h-2zM294 105h2v25h-2zM296 121h2v9h-2zM298 129h2v1h-2zM300 129h2v1h-2zM302 129h2v1h-2zM304 129h2v1h-2zM306 129h2v1h-2zM308 129h2v1h-2zM310 129h2v1h-2zM312 129h2v1h-2zM314 129h2v1h-2zM316 129h2v1h-2zM318 129h2v1h-2zM320 121h2v9h-2zM322 109h2v21h-2zM324 106h2v24h-2zM326 109h2v21h-2zM328 120h2v10h-2zM330 129h2v1h-2zM332 129h2v1h-2zM334 129h2v1h-2zM336 129h2v1h-2zM338 129h2v1h-2zM340 129h2v1h-2zM342 129h2v1h-2zM344 129h2v1h-2zM346 129h2v1h-2zM348 129h2v1h-2zM350 129h2v1h-2zM352 129h2v1h-2zM354 129h2v1h-2zM356 121h2v9h-2zM358 111h2v19h-2zM360 105h2v25h-2zM362 108h2v22h-2zM364 119h2v11h-2zM366 129h2v1h-2zM368 129h2v1h-2zM370 129h2v1h-2zM372 129h2v1h-2zM374 129h2v1h-2zM376 129h2v1h-2zM378 129h2v1h-2zM380 129h2v1h-2zM382 129h2v1h-2zM384 129h2v1h-2zM386 129h2v1h-2zM388 129h2v1h-2zM390 129h2v1h-2zM392 125h2v5h-2zM394 116h2v14h-2zM396 107h2v23h-2zM398 107h2v23h-2zM400 112h2v18h-2zM402 125h2v5h-2zM404 129h2v1h-2zM406 129h2v1h-2zM408 129h2v1h-2zM410 129h2v1h-2zM412 129h2v1h-2zM414 129h2v1h-2zM416 129h2v1h-2zM418 129h2v1h-2zM420 129h2v1h-2zM422 129h2v1h-2zM424 129h2v1h-2zM426 129h2v1h-2zM428 129h2v1h-2zM430 129h2v1h-2zM432 129h2v1h-2zM434 129h2v1h-2zM436 127h2v3h-2zM438 119h2v11h-2zM440 109h2v21h-2zM442 107h2v23h-2zM444 110h2v20h-2zM446 116h2v14h-2zM448 125h2v5h-2zM450 129h2v1h-2zM452 129h2v1h-2zM454 129h2v1h-2zM456 129h2v1h-2zM458 129h2v1h-2zM460 129h2v1h-2zM462 129h2v1h-2zM464 129h2v1h-2zM466 129h2v1h-2zM468 129h2v1h-2zM470 129h2v1h-2zM472 129h2v1h-2zM474 127h2v3h-2zM476 120h2v10h-2zM478 112h2v18h-2zM480 107h2v23h-2zM482 109h2v21h-2zM484 114h2v16h-2zM486 122h2v8h-2zM488 128h2v2h-2zM490 129h2v1h-2zM492 129h2v1h-2zM494 129h2v1h-2zM496 129h2v1h-2zM498 129h2v1h-2zM500 129h2v1h-2zM502 129h2v1h-2zM504 129h2v1h-2zM506 129h2v1h-2zM508 129h2v1h-2zM510 129h2v1h-2zM512 66h2v64h-2z" fill="#0000ff"/></svg>
<div class="a" style="left:30px;top:672px;width:5px;height:1px;background:#fff"></div>
<div class="a" style="left:551px;top:672px;width:5px;height:1px;background:#fff"></div>
<div class="a" style="left:30px;top:694px;width:5px;height:1px;background:#fff"></div>
<div class="a" style="left:551px;top:694px;width:5px;height:1px;background:#fff"></div>
<div class="a" style="left:30px;top:703px;width:5px;height:1px;background:#fff"></div>
<div class="a" style="left:551px;top:703px;width:5px;height:1px;background:#fff"></div>
<div class="a" style="left:30px;top:725px;width:5px;height:1px;background:#fff"></div>
<div class="a" style="left:551px;top:725px;width:5px;height:1px;background:#fff"></div>
<div class="a" style="left:30px;top:735px;width:5px;height:1px;background:#fff"></div>
<div class="a" style="left:551px;top:735px;width:5px;height:1px;background:#fff"></div>
<div class="a" style="left:30px;top:757px;width:5px;height:1px;background:#fff"></div>
<div class="a" style="left:551px;top:757px;width:5px;height:1px;background:#fff"></div>
<div class="a" style="left:30px;top:772px;width:5px;height:1px;background:#fff"></div>
<div class="a" style="left:551px;top:772px;width:5px;height:1px;background:#fff"></div>
<div class="a" style="left:88px;top:791px;width:1px;height:10px;background:#fff"></div>
<div class="a" style="left:139px;top:791px;width:1px;height:10px;background:#fff"></div>
<div class="a" style="left:190px;top:791px;width:1px;height:10px;background:#fff"></div>
<div class="a" style="left:241px;top:791px;width:1px;height:10px;background:#fff"></div>
<div class="a" style="left:292px;top:791px;width:1px;height:10px;background:#fff"></div>
<div class="a" style="left:343px;top:791px;width:1px;height:10px;background:#fff"></div>
<div class="a" style="left:394px;top:791px;width:1px;height:10px;background:#fff"></div>
<div class="a" style="left:445px;top:791px;width:1px;height:10px;background:#fff"></div>
<div class="a" style="left:496px;top:791px;width:1px;height:10px;background:#fff"></div>
</body></html>
